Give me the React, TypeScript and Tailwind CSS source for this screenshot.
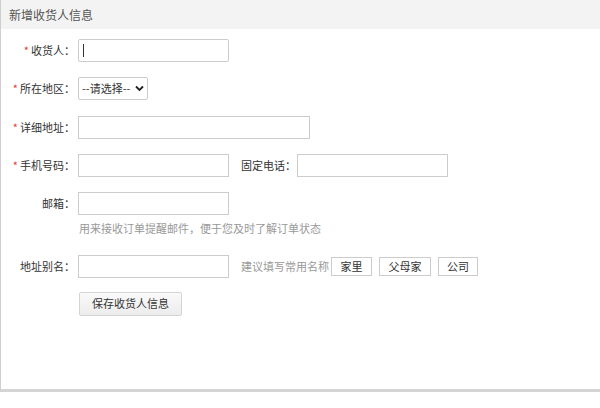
import React from "react";

const F = { fontFamily: '"Microsoft YaHei","Noto Sans CJK SC",sans-serif' };

function Label({ t, req }: { t: string; req?: boolean }) {
  return (
    <div className="w-[74px] shrink-0 text-right text-[11px] text-[#333] whitespace-nowrap">
      {req && <span className="text-[#e4393c] mr-[2px]">*</span>}
      {t}：
    </div>
  );
}

const inp = "h-[23px] border border-[#cccccc] bg-white shrink-0";
const tag = "h-[19px] border border-[#ccc] flex items-center justify-center text-[11px] text-[#333]";

export default function App() {
  return (
    <div style={F} className="w-[600px] h-[408px] bg-white relative">
      <div className="border-l border-[#cfcfcf] h-[392px] border-b-[3px] border-b-[#d4d4d4]">
        <div className="h-[29px] bg-[#f3f3f3] flex items-center pl-[8px] text-[12px] text-[#555]">新增收货人信息</div>
        <div className="flex flex-col">
          <div className="flex items-center mt-[10px]">
            <Label t="收货人" req />
            <div className={`${inp} ml-[3px] w-[151px] border-[#7fa3d8] rounded-[2px] flex items-center pl-[4px]`}>
              <div className="w-px h-[13px] bg-[#333]" />
            </div>
          </div>
          <div className="flex items-center mt-[15px]">
            <Label t="所在地区" req />
            <div className={`${inp} ml-[3px] w-[70px] rounded-[2px] flex items-center justify-between px-[3px] text-[11px] text-[#333]`}>
              <span>--请选择--</span>
              <svg width="9" height="7" viewBox="0 0 9 7"><path d="M1 1.5l3.5 3.5L8 1.5" stroke="#222" strokeWidth="1.8" fill="none" /></svg>
            </div>
          </div>
          <div className="flex items-center mt-[16px]">
            <Label t="详细地址" req />
            <div className={`${inp} ml-[3px] w-[232px]`} />
          </div>
          <div className="flex items-center mt-[15px]">
            <Label t="手机号码" req />
            <div className={`${inp} ml-[3px] w-[151px]`} />
            <div className="ml-[12px] text-[11px] text-[#333] w-[56px] whitespace-nowrap">固定电话：</div>
            <div className={`${inp} w-[151px]`} />
          </div>
          <div className="flex items-center mt-[15px]">
            <Label t="邮箱" />
            <div className={`${inp} ml-[3px] w-[151px]`} />
          </div>
          <div className="ml-[78px] mt-[5px] text-[11px] text-[#999]">用来接收订单提醒邮件，便于您及时了解订单状态</div>
          <div className="flex items-center mt-[18px]">
            <Label t="地址别名" />
            <div className={`${inp} ml-[3px] w-[151px]`} />
            <div className="ml-[12px] text-[11px] text-[#999] whitespace-nowrap">建议填写常用名称</div>
            <div className={`${tag} ml-[2px] w-[41px]`}>家里</div>
            <div className={`${tag} ml-[7px] w-[52px]`}>父母家</div>
            <div className={`${tag} ml-[7px] w-[40px]`}>公司</div>
          </div>
          <div className="ml-[78px] mt-[14px] w-[103px] h-[24px] border border-[#d4d4d4] rounded-[2px] bg-gradient-to-b from-[#fafafa] to-[#ececec] flex items-center justify-center text-[11px] text-[#333]">保存收货人信息</div>
        </div>
      </div>
    </div>
  );
}
